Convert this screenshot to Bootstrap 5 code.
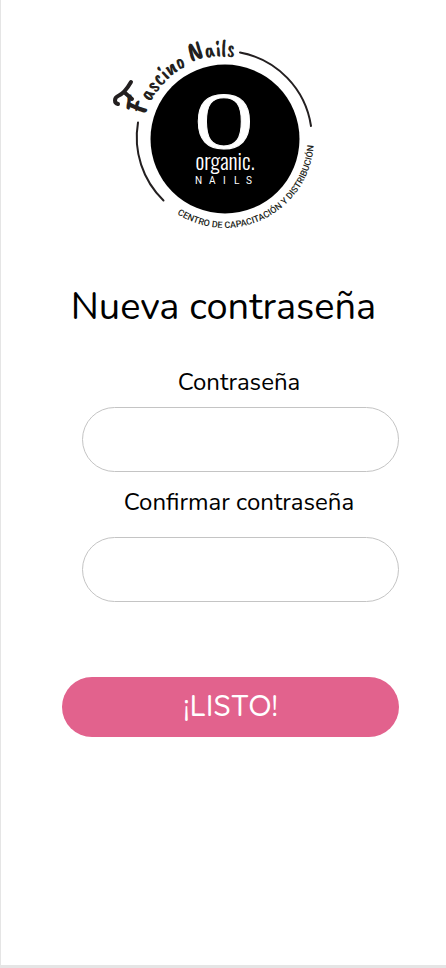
<!DOCTYPE html>
<html lang="es">
<head>
<meta charset="utf-8">
<meta name="viewport" content="width=device-width, initial-scale=1">
<title>Nueva contraseña</title>
<link href="https://cdn.jsdelivr.net/npm/bootstrap@5.3.0/dist/css/bootstrap.min.css" rel="stylesheet">
<style>
  body { font-family: "Nunito", "Noto Sans", sans-serif; color: #000; background: #fff; }
  .screen { border-left: 1px solid #e5e5e5; border-bottom: 3px solid #e5e5e5; padding-top: 32px; }
  .brand-logo { width: 212px; height: 204px; margin-left: -20px; overflow: visible; }
  .screen-title { font-size: 38px; line-height: 52px; margin-top: 45px; }
  .reset-form { padding: 33px 47px 0 61px; }
  .fields { padding-left: 20px; }
  .field-label { font-size: 24px; line-height: 32px; padding-right: 3px; }
  .pill-input { height: 65px; border-color: #c4c4c4; padding: 0 28px; font-size: 24px; }
  .label-gap { margin-bottom: 9px; }
  .second-field { margin-top: 14px; }
  .second-field .label-gap { margin-bottom: 19px; }
  .btn-ready { --bs-btn-color: #fff; --bs-btn-bg: #e2628d; --bs-btn-hover-color: #fff; --bs-btn-hover-bg: #d04f7b; --bs-btn-active-color: #fff; --bs-btn-active-bg: #c1436e; height: 60px; margin-top: 75px; padding: 0 12px 4px; font: 500 30px "Quicksand", "Lato", sans-serif; }
</style>
<script src="https://cdn.jsdelivr.net/npm/bootstrap@5.3.0/dist/js/bootstrap.bundle.min.js"></script>
</head>
<body>
<main class="screen min-vh-100 d-flex flex-column">
  <svg class="brand-logo align-self-center" viewBox="108 32 212 204" role="img" aria-label="Fascino Nails, Organic Nails">
    <defs>
      <path id="topArc" d="M142 139a83 83 0 0 1 166 0"/>
      <path id="bottomArc" d="M136 139a89 89 0 0 0 178 0a89 89 0 0 0-12-45"/>
    </defs>
    <circle cx="225" cy="139" r="74.5"/>
    <g fill="none" stroke="#231f20" stroke-width="2" stroke-linecap="round">
      <path d="M240 52.500A88 88 0 0 1 311 126"/>
      <path d="M138 122.500A88 88 0 0 0 163.500 200.500"/>
    </g>
    <path d="M118 104c-4-1-4-6 0-8c5-2 9-7 13-14M124 92l8 7" fill="none" stroke="#231f20" stroke-width="4" stroke-linecap="round"/>
    <text fill="#231f20" font-family="Caveat Brush, Lato, sans-serif" font-size="24"><textPath href="#topArc" startOffset="22"><tspan font-size="34">F</tspan>ascino <tspan font-size="28">N</tspan>ails</textPath></text>
    <text fill="#231f20" font-family="Roboto, sans-serif" font-weight="500" font-size="9"><textPath href="#bottomArc" startOffset="89">CENTRO DE CAPACITACIÓN Y DISTRIBUCIÓN</textPath></text>
    <g fill="#fff">
      <text x="224" y="148" text-anchor="middle" font-family="Liberation Serif, serif" font-size="80" stroke="#fff" stroke-width="1">O</text>
      <text x="225" y="170" text-anchor="middle" font-family="Oswald, Roboto Condensed, Liberation Sans Narrow, sans-serif" font-weight="300" font-size="22">organic.</text>
      <text x="195 209 223 234 246" y="184" font-family="Roboto, sans-serif" font-size="10">NAILS</text>
    </g>
  </svg>
  <h1 class="screen-title text-center fw-normal mb-0">Nueva contraseña</h1>
  <form class="reset-form">
    <div class="fields">
      <div>
        <label class="field-label label-gap d-block text-center" for="password">Contraseña</label>
        <input class="form-control rounded-pill pill-input" type="password" id="password" autocomplete="new-password">
      </div>
      <div class="second-field">
        <label class="field-label label-gap d-block text-center" for="confirmation">Confirmar contraseña</label>
        <input class="form-control rounded-pill pill-input" type="password" id="confirmation" autocomplete="new-password">
      </div>
    </div>
    <button class="btn btn-ready rounded-pill w-100 border-0" type="submit">¡LISTO!</button>
  </form>
</main>
</body>
</html>
